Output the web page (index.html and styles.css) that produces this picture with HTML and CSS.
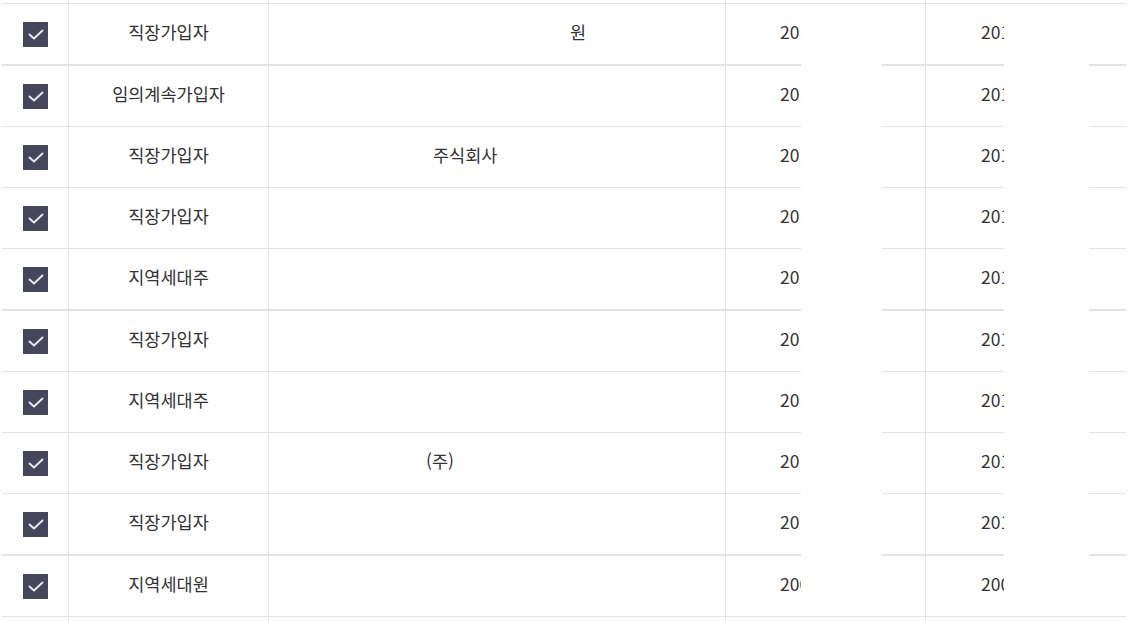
FILE: index.html
```html
<!DOCTYPE html>
<html lang="ko">
<head>
<meta charset="utf-8">
<title>가입자 목록</title>
<link rel="stylesheet" href="styles.css">
</head>
<body>
<div class="table">
  <div class="row top">
    <div class="cell"></div><div class="cell"></div><div class="cell"></div><div class="cell"></div><div class="cell"></div>
  </div>

  <div class="row thick">
    <div class="cell chk"><svg class="box" viewBox="0 0 25 25"><rect width="25" height="25"/><polyline points="6.5,12.5 11,16.5 19.5,8.5"/></svg></div>
    <div class="cell center">직장가입자</div>
    <div class="cell name n-a">원</div>
    <div class="cell date d4">2019.03.01</div>
    <div class="cell date d5">2019.03.01</div>
  </div>

  <div class="row">
    <div class="cell chk"><svg class="box" viewBox="0 0 25 25"><rect width="25" height="25"/><polyline points="6.5,12.5 11,16.5 19.5,8.5"/></svg></div>
    <div class="cell center">임의계속가입자</div>
    <div class="cell name"></div>
    <div class="cell date d4">2018.07.01</div>
    <div class="cell date d5">2019.01.01</div>
  </div>

  <div class="row">
    <div class="cell chk"><svg class="box" viewBox="0 0 25 25"><rect width="25" height="25"/><polyline points="6.5,12.5 11,16.5 19.5,8.5"/></svg></div>
    <div class="cell center">직장가입자</div>
    <div class="cell name n-b">주식회사</div>
    <div class="cell date d4">2017.02.01</div>
    <div class="cell date d5">2018.06.30</div>
  </div>

  <div class="row">
    <div class="cell chk"><svg class="box" viewBox="0 0 25 25"><rect width="25" height="25"/><polyline points="6.5,12.5 11,16.5 19.5,8.5"/></svg></div>
    <div class="cell center">직장가입자</div>
    <div class="cell name"></div>
    <div class="cell date d4">2016.05.01</div>
    <div class="cell date d5">2017.01.31</div>
  </div>

  <div class="row thick">
    <div class="cell chk"><svg class="box" viewBox="0 0 25 25"><rect width="25" height="25"/><polyline points="6.5,12.5 11,16.5 19.5,8.5"/></svg></div>
    <div class="cell center">지역세대주</div>
    <div class="cell name"></div>
    <div class="cell date d4">2015.09.01</div>
    <div class="cell date d5">2016.04.30</div>
  </div>

  <div class="row">
    <div class="cell chk"><svg class="box" viewBox="0 0 25 25"><rect width="25" height="25"/><polyline points="6.5,12.5 11,16.5 19.5,8.5"/></svg></div>
    <div class="cell center">직장가입자</div>
    <div class="cell name"></div>
    <div class="cell date d4">2014.03.01</div>
    <div class="cell date d5">2015.08.31</div>
  </div>

  <div class="row">
    <div class="cell chk"><svg class="box" viewBox="0 0 25 25"><rect width="25" height="25"/><polyline points="6.5,12.5 11,16.5 19.5,8.5"/></svg></div>
    <div class="cell center">지역세대주</div>
    <div class="cell name"></div>
    <div class="cell date d4">2013.06.01</div>
    <div class="cell date d5">2014.02.28</div>
  </div>

  <div class="row">
    <div class="cell chk"><svg class="box" viewBox="0 0 25 25"><rect width="25" height="25"/><polyline points="6.5,12.5 11,16.5 19.5,8.5"/></svg></div>
    <div class="cell center">직장가입자</div>
    <div class="cell name n-c">(주)</div>
    <div class="cell date d4">2012.01.01</div>
    <div class="cell date d5">2013.05.31</div>
  </div>

  <div class="row thick">
    <div class="cell chk"><svg class="box" viewBox="0 0 25 25"><rect width="25" height="25"/><polyline points="6.5,12.5 11,16.5 19.5,8.5"/></svg></div>
    <div class="cell center">직장가입자</div>
    <div class="cell name"></div>
    <div class="cell date d4">2010.04.01</div>
    <div class="cell date d5">2011.12.31</div>
  </div>

  <div class="row">
    <div class="cell chk"><svg class="box" viewBox="0 0 25 25"><rect width="25" height="25"/><polyline points="6.5,12.5 11,16.5 19.5,8.5"/></svg></div>
    <div class="cell center">지역세대원</div>
    <div class="cell name"></div>
    <div class="cell date d4">2008.01.01</div>
    <div class="cell date d5">2009.03.31</div>
  </div>

  <div class="row">
    <div class="cell"></div><div class="cell"></div><div class="cell"></div><div class="cell"></div><div class="cell"></div>
  </div>

  <div class="mask mask-a"></div>
  <div class="mask mask-b"></div>
</div>
</body>
</html>
```
FILE: styles.css
```css
html, body {
  margin: 0;
  padding: 0;
  background: #ffffff;
  overflow: hidden;
}

body {
  font-family: "Noto Sans CJK KR", "Noto Sans", sans-serif;
  font-size: 17.5px;
  color: #333333;
}

.table {
  position: relative;
  margin-left: 2px;
  width: 1124px;
}

.row {
  display: grid;
  grid-template-columns: 67px 200px 457px 200px 200px;
  border-bottom: 1px solid #e2e2e8;
}

.row.thick {
  border-bottom-width: 2px;
}

.row.top {
  height: 3px;
}

.row.top .cell {
  height: 3px;
  padding: 0;
}

.cell {
  box-sizing: border-box;
  height: 60px;
  padding-bottom: 4px;
  border-right: 1px solid #e2e2e8;
  display: flex;
  align-items: center;
  white-space: nowrap;
  overflow: hidden;
  line-height: 1;
}

.cell:last-child {
  border-right: none;
}

.center {
  justify-content: center;
}

.chk {
  justify-content: center;
  padding-bottom: 0;
}

.box {
  width: 25px;
  height: 25px;
  display: block;
}

.box rect {
  fill: #45465c;
}

.box polyline {
  fill: none;
  stroke: #e6e6ee;
  stroke-width: 2;
  stroke-linecap: round;
  stroke-linejoin: round;
}

.name.n-a { padding-left: 301px; }
.name.n-b { padding-left: 164px; }
.name.n-c { padding-left: 157px; }

.date.d4 { padding-left: 54px; }
.date.d5 { padding-left: 55px; }

.mask {
  position: absolute;
  top: 4px;
  height: 612px;
  background: #ffffff;
}

.mask-a {
  left: 799px;
  width: 81px;
}

.mask-b {
  left: 1002px;
  width: 85px;
}
```
